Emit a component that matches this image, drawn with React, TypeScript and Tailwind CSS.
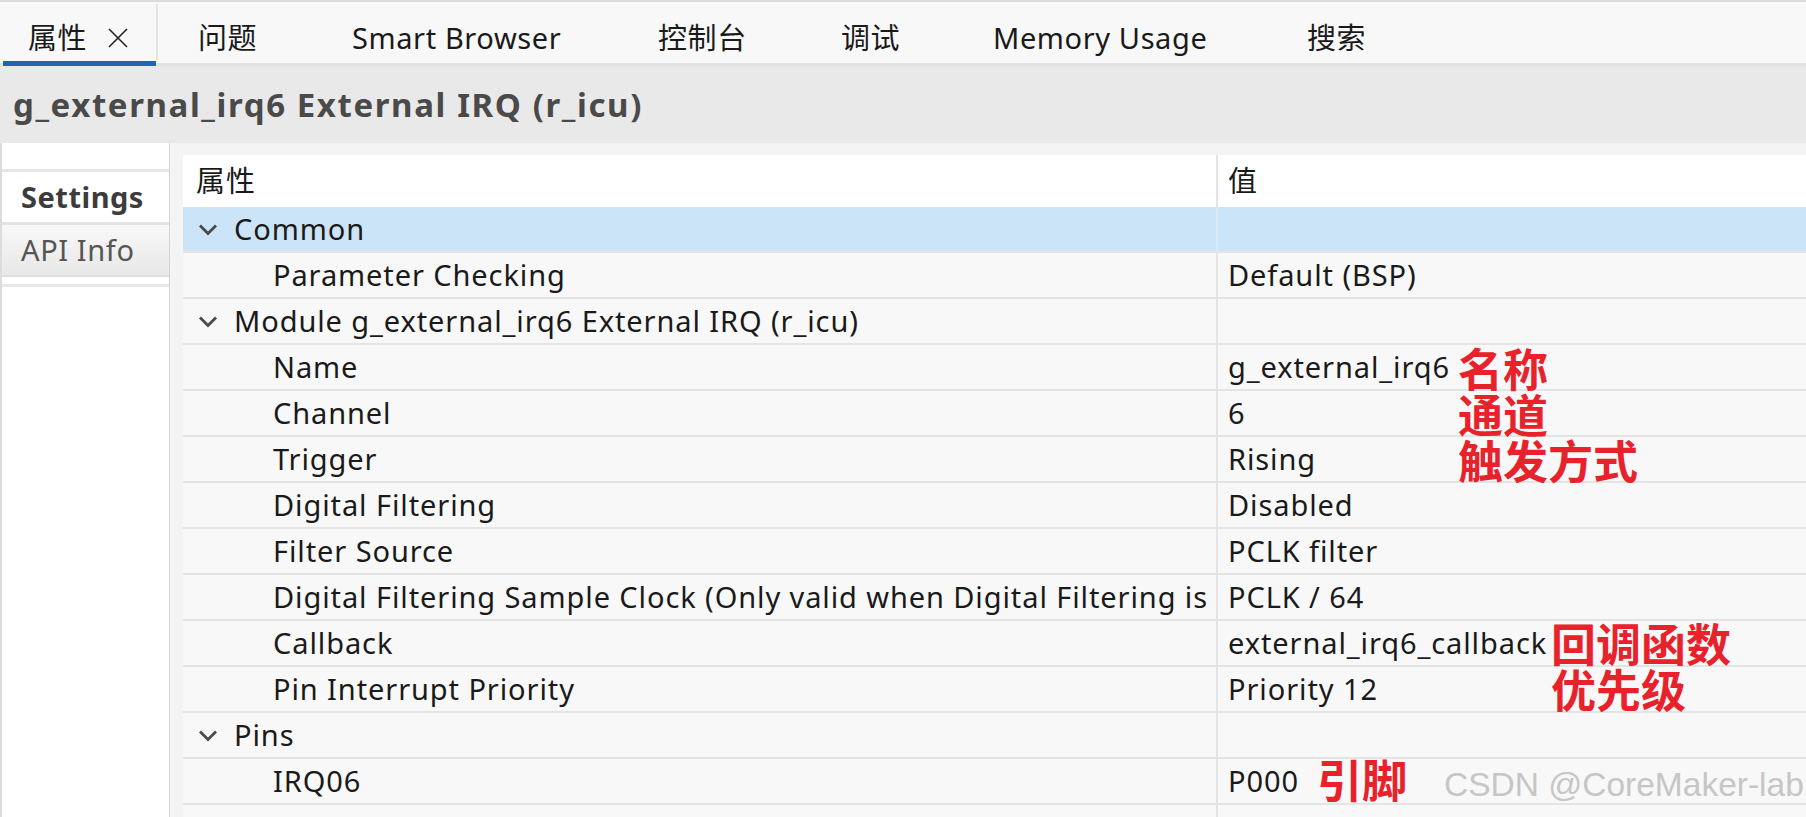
import React from 'react';

type Row = { level: 0 | 1; label: string; value: string; selected?: boolean };

const rows: Row[] = [
  { level: 0, label: 'Common', value: '', selected: true },
  { level: 1, label: 'Parameter Checking', value: 'Default (BSP)' },
  { level: 0, label: 'Module g_external_irq6 External IRQ (r_icu)', value: '' },
  { level: 1, label: 'Name', value: 'g_external_irq6' },
  { level: 1, label: 'Channel', value: '6' },
  { level: 1, label: 'Trigger', value: 'Rising' },
  { level: 1, label: 'Digital Filtering', value: 'Disabled' },
  { level: 1, label: 'Filter Source', value: 'PCLK filter' },
  { level: 1, label: 'Digital Filtering Sample Clock (Only valid when Digital Filtering is Enabled)', value: 'PCLK / 64' },
  { level: 1, label: 'Callback', value: 'external_irq6_callback' },
  { level: 1, label: 'Pin Interrupt Priority', value: 'Priority 12' },
  { level: 0, label: 'Pins', value: '' },
  { level: 1, label: 'IRQ06', value: 'P000' },
];

const tabs = [
  { label: '问题', w: 'w-[154px]' },
  { label: 'Smart Browser', w: 'w-[306px]' },
  { label: '控制台', w: 'w-[183px]' },
  { label: '调试', w: 'w-[152px]' },
  { label: 'Memory Usage', w: 'w-[314px]' },
  { label: '搜索', w: 'w-[120px]' },
];

const Chevron = () => (
  <svg width="20" height="13" viewBox="0 0 20 13" className="mr-[16px] shrink-0">
    <polyline points="2,2.5 10,10.5 18,2.5" fill="none" stroke="#4a4a4a" strokeWidth="2.8" />
  </svg>
);

export default function App() {
  return (
    <div className="relative w-[1806px] h-[817px] overflow-hidden bg-[#f4f4f4] font-['Noto_Sans','Noto_Sans_CJK_SC',sans-serif] text-[#1a1a1a]">
      {/* Tab strip */}
      <div className="h-[66px] border-t-2 border-[#dcdcdc] bg-[#f8f8f8] border-b-[3px] border-b-[#e2e2e2] flex">
        <div className="relative w-[155px] ml-[1px] flex items-center pt-[10px] pl-[27px] text-[29px] tracking-[0.6px]">
          <span>属性</span>
          <svg width="22" height="22" viewBox="0 0 22 22" className="ml-[20px]">
            <path d="M2 2 L20 20 M20 2 L2 20" stroke="#222" strokeWidth="1.6" />
          </svg>
          <div className="absolute left-[2px] right-0 bottom-[-3px] h-[5px] bg-[#2462b8]" />
        </div>
        <div className="w-[2px] my-[2px] bg-[#e4e4e4]" />
        <div className="flex items-center pt-[10px] pl-[40px] text-[29px] tracking-[0.6px]">
          {tabs.map((t) => (
            <div key={t.label} className={`${t.w} shrink-0`}>
              {t.label}
            </div>
          ))}
        </div>
      </div>

      {/* Title */}
      <div className="h-[77px] bg-[#e9e9e9] flex items-center pl-[13px] text-[33px] font-bold text-[#4a4a4a] tracking-[1.6px]">
        g_external_irq6 External IRQ (r_icu)
      </div>

      {/* Body */}
      <div className="flex h-[674px]">
        {/* Side tabs */}
        <div className="w-[170px] shrink-0 bg-white border-l-2 border-[#dcdcdc] border-r border-r-[#d4d4d4]">
          <div className="h-[26px]" />
          <div className="h-[53px] border-t-[3px] border-[#e6e6e6] flex items-center pl-[19px] text-[29px] font-bold text-[#3c3c3c] tracking-[0.5px]">
            Settings
          </div>
          <div className="h-[53px] border-t-[3px] border-[#e3e3e3] flex items-center pl-[19px] text-[29px] text-[#555] tracking-[0.6px] bg-gradient-to-b from-[#f8f8f8] to-[#e8e8e8]">
            API Info
          </div>
          <div className="h-[9px] border-t-2 border-[#dedede]" />
          <div className="border-t-[3px] border-[#e8e8e8]" />
        </div>

        <div className="w-[13px] shrink-0" />

        {/* Property table */}
        <div className="flex-1 mt-[12px] bg-[#f8f8f8] text-[29px] tracking-[0.9px]">
          <div className="grid grid-cols-[1035px_1fr] h-[52px] bg-white">
            <div className="border-r-2 border-[#e4e4e4] flex items-center pl-[13px]">属性</div>
            <div className="flex items-center pl-[10px]">值</div>
          </div>
          {rows.map((r, i) => (
            <div
              key={i}
              className={`grid grid-cols-[1035px_1fr] h-[46px] border-b-2 border-[#e4e4e4] ${r.selected ? 'bg-[#cce4f7]' : ''}`}
            >
              <div
                className={`border-r-2 ${r.selected ? 'border-[#dbe9f4]' : 'border-[#e4e4e4]'} flex items-center overflow-hidden whitespace-nowrap ${r.level === 0 ? 'pl-[15px]' : 'pl-[90px]'}`}
              >
                {r.level === 0 && <Chevron />}
                <span>{r.label}</span>
              </div>
              <div className="flex items-center pl-[10px] whitespace-nowrap overflow-hidden">{r.value}</div>
            </div>
          ))}
          <div className="grid grid-cols-[1035px_1fr] h-[46px]">
            <div className="border-r-2 border-[#e4e4e4]" />
            <div />
          </div>
        </div>
      </div>

      {/* Red annotations */}
      <div className="absolute left-[1458px] top-[345px] text-[45px] leading-[46px] font-bold text-[#e8222b] font-['Noto_Sans_CJK_SC',sans-serif]">
        <div>名称</div>
        <div>通道</div>
        <div>触发方式</div>
      </div>
      <div className="absolute left-[1551px] top-[620px] text-[45px] leading-[46px] font-bold text-[#e8222b] font-['Noto_Sans_CJK_SC',sans-serif]">
        <div>回调函数</div>
        <div>优先级</div>
      </div>
      <div className="absolute left-[1317px] top-[756px] text-[45px] leading-[46px] font-bold text-[#e8222b] font-['Noto_Sans_CJK_SC',sans-serif]">
        引脚
      </div>

      {/* Watermark */}
      <div className="absolute left-[1444px] top-[768px] text-[33.5px] leading-none text-[#c6c6c6] font-['Liberation_Sans',sans-serif] whitespace-nowrap">
        CSDN @CoreMaker-lab
      </div>
    </div>
  );
}
